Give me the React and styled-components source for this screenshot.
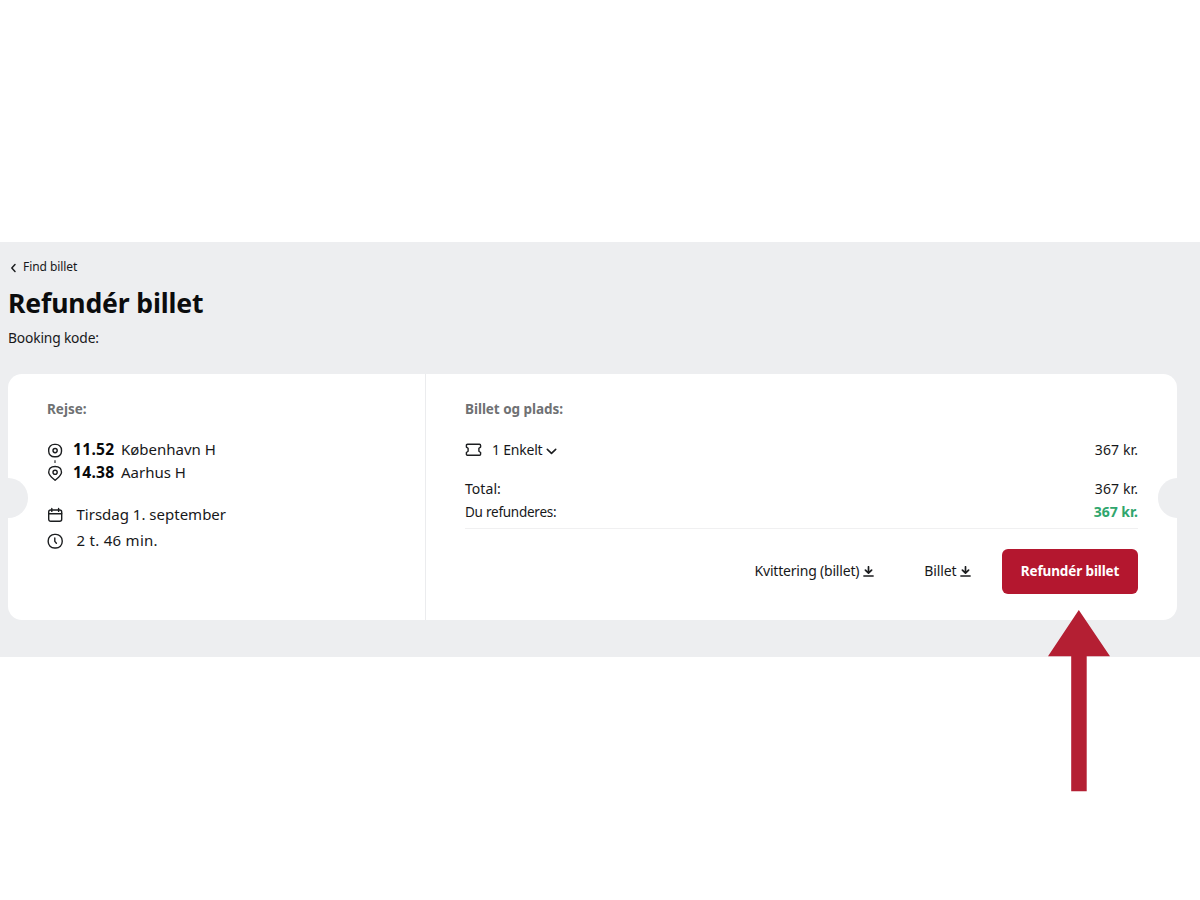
import React from "react";
import styled, { createGlobalStyle } from "styled-components";

const Global = createGlobalStyle`
  * { box-sizing: border-box; }
  body { margin: 0; background: #fff; color: #17181a; font-family: "Noto Sans", sans-serif; }
`;

const Page = styled.main`
  position: relative;
  width: 1200px;
  height: 900px;
  overflow: hidden;
  padding-top: 242px;
`;
const Band = styled.section`
  height: 415px;
  background: #edeef0;
  padding: 15px 23px 0 8px;
`;
const Text = styled.span`
  display: block;
  white-space: nowrap;
  font-size: ${(p) => p.$size || 14}px;
  font-weight: ${(p) => (p.$bold ? 700 : 400)};
  letter-spacing: ${(p) => p.$track || 0}px;
  line-height: ${(p) => p.$line || 20}px;
  color: ${(p) => p.$color || "inherit"};
`;
const BackLink = styled.a`
  display: flex;
  align-items: center;
  gap: 6px;
  height: 20px;
  padding-left: 1px;
  svg { margin-top: 2px; }
`;
const Title = styled.h1`
  margin: 9px 0 0;
  font-size: 26.6px;
  line-height: 35px;
  letter-spacing: -0.16px;
  color: #0b0c0d;
`;
const Booking = styled.div`
  margin-top: 7px;
`;
const Card = styled.article`
  position: relative;
  display: flex;
  width: 1169px;
  height: 246px;
  margin-top: 26px;
  border-radius: 14px;
  background: #fff;
  overflow: hidden;
`;
const Notch = styled.i`
  position: absolute;
  top: 104px;
  ${(p) => p.$side}: -20px;
  width: 39.5px;
  height: 39.5px;
  border-radius: 50%;
  background: #edeef0;
`;
const Journey = styled.div`
  width: 418px;
  border-right: 1px solid #ebecee;
  padding: 25px 0 0 39px;
`;
const Details = styled.div`
  flex: 1;
  padding: 25px 39px 0 39px;
`;
const Route = styled.div`
  display: flex;
  gap: 10px;
  margin-top: 19px;
`;
const Stops = styled.div`
  display: grid;
  grid-template-columns: 48px auto;
  grid-auto-rows: 23px;
  align-items: center;
  margin-top: -1px;
`;
const Facts = styled.div`
  margin-top: 17px;
`;
const Fact = styled.div`
  display: flex;
  align-items: center;
  gap: 13.5px;
  height: 26px;
  svg { margin-top: 2px; }
`;
const Row = styled.div`
  display: flex;
  align-items: center;
  justify-content: space-between;
  height: 23px;
  margin-top: ${(p) => p.$top || 0}px;
`;
const Ticket = styled.div`
  display: flex;
  align-items: center;
  svg:first-child { margin: 1px 10px 0 0; }
  svg:last-child { margin: 3px 0 0 4px; }
`;
const Actions = styled.div`
  display: flex;
  align-items: center;
  justify-content: flex-end;
  margin-top: 5px;
  padding-top: 19.5px;
  border-top: 1px solid #f0f0f1;
`;
const Download = styled.a`
  display: flex;
  align-items: center;
  gap: 4px;
  margin-right: ${(p) => p.$gap}px;
  padding-bottom: 1px;
  svg { margin-top: 1px; }
`;
const Refund = styled.button`
  display: flex;
  align-items: center;
  justify-content: center;
  width: 136px;
  height: 45.5px;
  padding: 0 0 1px;
  border: 0;
  border-radius: 6px;
  background: #b4172f;
  color: #fff;
  font-family: inherit;
`;
const Pointer = styled.svg`
  position: absolute;
  left: 1048px;
  top: 609px;
`;

const Icon = ({ w, h, sw = 1.4, children }) => (
  <svg width={w} height={h} viewBox={`0 0 ${w} ${h}`} fill="none" stroke="#1c1e20"
    strokeWidth={sw} strokeLinecap="round" strokeLinejoin="round">{children}</svg>
);
const DownIcon = () => (
  <Icon w={11} h={11} sw={1.7}>
    <path d="M5.5 .8v6.2M2.4 4.1l3.1 3.1 3.1-3.1" />
    <path d="M.8 10h9.4" strokeWidth="1.3" />
  </Icon>
);

export default function App() {
  return (
    <Page>
      <Global />
      <Band>
        <BackLink>
          <Icon w={8} h={10} sw={1.5}><path d="M6 1.6 2.8 5 6 8.4" /></Icon>
          <Text $size={12} $track={-0.06}>Find billet</Text>
        </BackLink>
        <Title>Refundér billet</Title>
        <Booking><Text $size={13.8} $track={-0.16}>Booking kode:</Text></Booking>
        <Card>
          <Journey>
            <Text $size={13.5} $bold $color="#6f7173">Rejse:</Text>
            <Route>
              <Icon w={16} h={46}>
                <rect x="1.7" y="6.4" width="12.8" height="12.4" rx="5.6" />
                <circle cx="8.1" cy="12.6" r="2.1" />
                <path d="M8 22.2v2.8" strokeWidth="1.1" strokeLinecap="butt" />
                <path d="M8.1 42.3C5.5 40 1.7 37.6 1.7 34.3c0-3.8 2.7-5.8 6.4-5.8s6.4 2 6.4 5.8c0 3.3-3.8 5.7-6.4 8z" />
                <circle cx="8.1" cy="34.3" r="2.1" />
              </Icon>
              <Stops>
                <Text $size={15.6} $track={0.28} $bold $color="#090a0b">11.52</Text>
                <Text $size={15}>København H</Text>
                <Text $size={15.6} $track={0.28} $bold $color="#090a0b">14.38</Text>
                <Text $size={15}>Aarhus H</Text>
              </Stops>
            </Route>
            <Facts>
              <Fact>
                <Icon w={16} h={16}>
                  <rect x="1.7" y="3" width="13" height="11.3" rx="2" />
                  <path d="M1.7 6.8h13M4.8 1.4v3M11.6 1.4v3" />
                </Icon>
                <Text $size={15}>Tirsdag 1. september</Text>
              </Fact>
              <Fact>
                <Icon w={16} h={16}>
                  <rect x="1.2" y="1.4" width="14" height="13.6" rx="6.3" />
                  <path d="M7.8 5v3.4l1.6 1.9" />
                </Icon>
                <Text $size={15} $track={0.28}>2 t. 46 min.</Text>
              </Fact>
            </Facts>
          </Journey>
          <Details>
            <Text $size={13.5} $track={-0.05} $bold $color="#6f7173">Billet og plads:</Text>
            <Row $top={19}>
              <Ticket>
                <Icon w={17} h={14}>
                  <path d="M2.5 1.3h12q1.1 0 1.1 1.1v1.7l-1.7 1.2v3l1.7 1.2v1.7q0 1.1-1.1 1.1h-12q-1.1 0-1.1-1.1V9.5l1.7-1.2v-3L1.4 4.1V2.4q0-1.1 1.1-1.1z" />
                </Icon>
                <Text $track={-0.22}>1 Enkelt</Text>
                <Icon w={11} h={7} sw={1.6}><path d="M1.3 1.4l4.2 4 4.2-4" /></Icon>
              </Ticket>
              <Text $track={0.1}>367 kr.</Text>
            </Row>
            <Row $top={16}><Text $track={0.05}>Total:</Text><Text $track={0.1}>367 kr.</Text></Row>
            <Row><Text $size={13.5} $track={-0.25}>Du refunderes:</Text><Text $bold $color="#30a66d">367 kr.</Text></Row>
            <Actions>
              <Download $gap={50}><Text $track={-0.2}>Kvittering (billet)</Text><DownIcon /></Download>
              <Download $gap={30.6}><Text $track={-0.12}>Billet</Text><DownIcon /></Download>
              <Refund><Text $size={13.5} $track={-0.12} $bold>Refundér billet</Text></Refund>
            </Actions>
          </Details>
          <Notch $side="left" />
          <Notch $side="right" />
        </Card>
      </Band>
      <Pointer width="62" height="183" viewBox="0 0 62 183">
        <path d="M30.8 1 62 47.3H38.7V182.3H23.2V47.3H0z" fill="#b41f33" />
      </Pointer>
    </Page>
  );
}
